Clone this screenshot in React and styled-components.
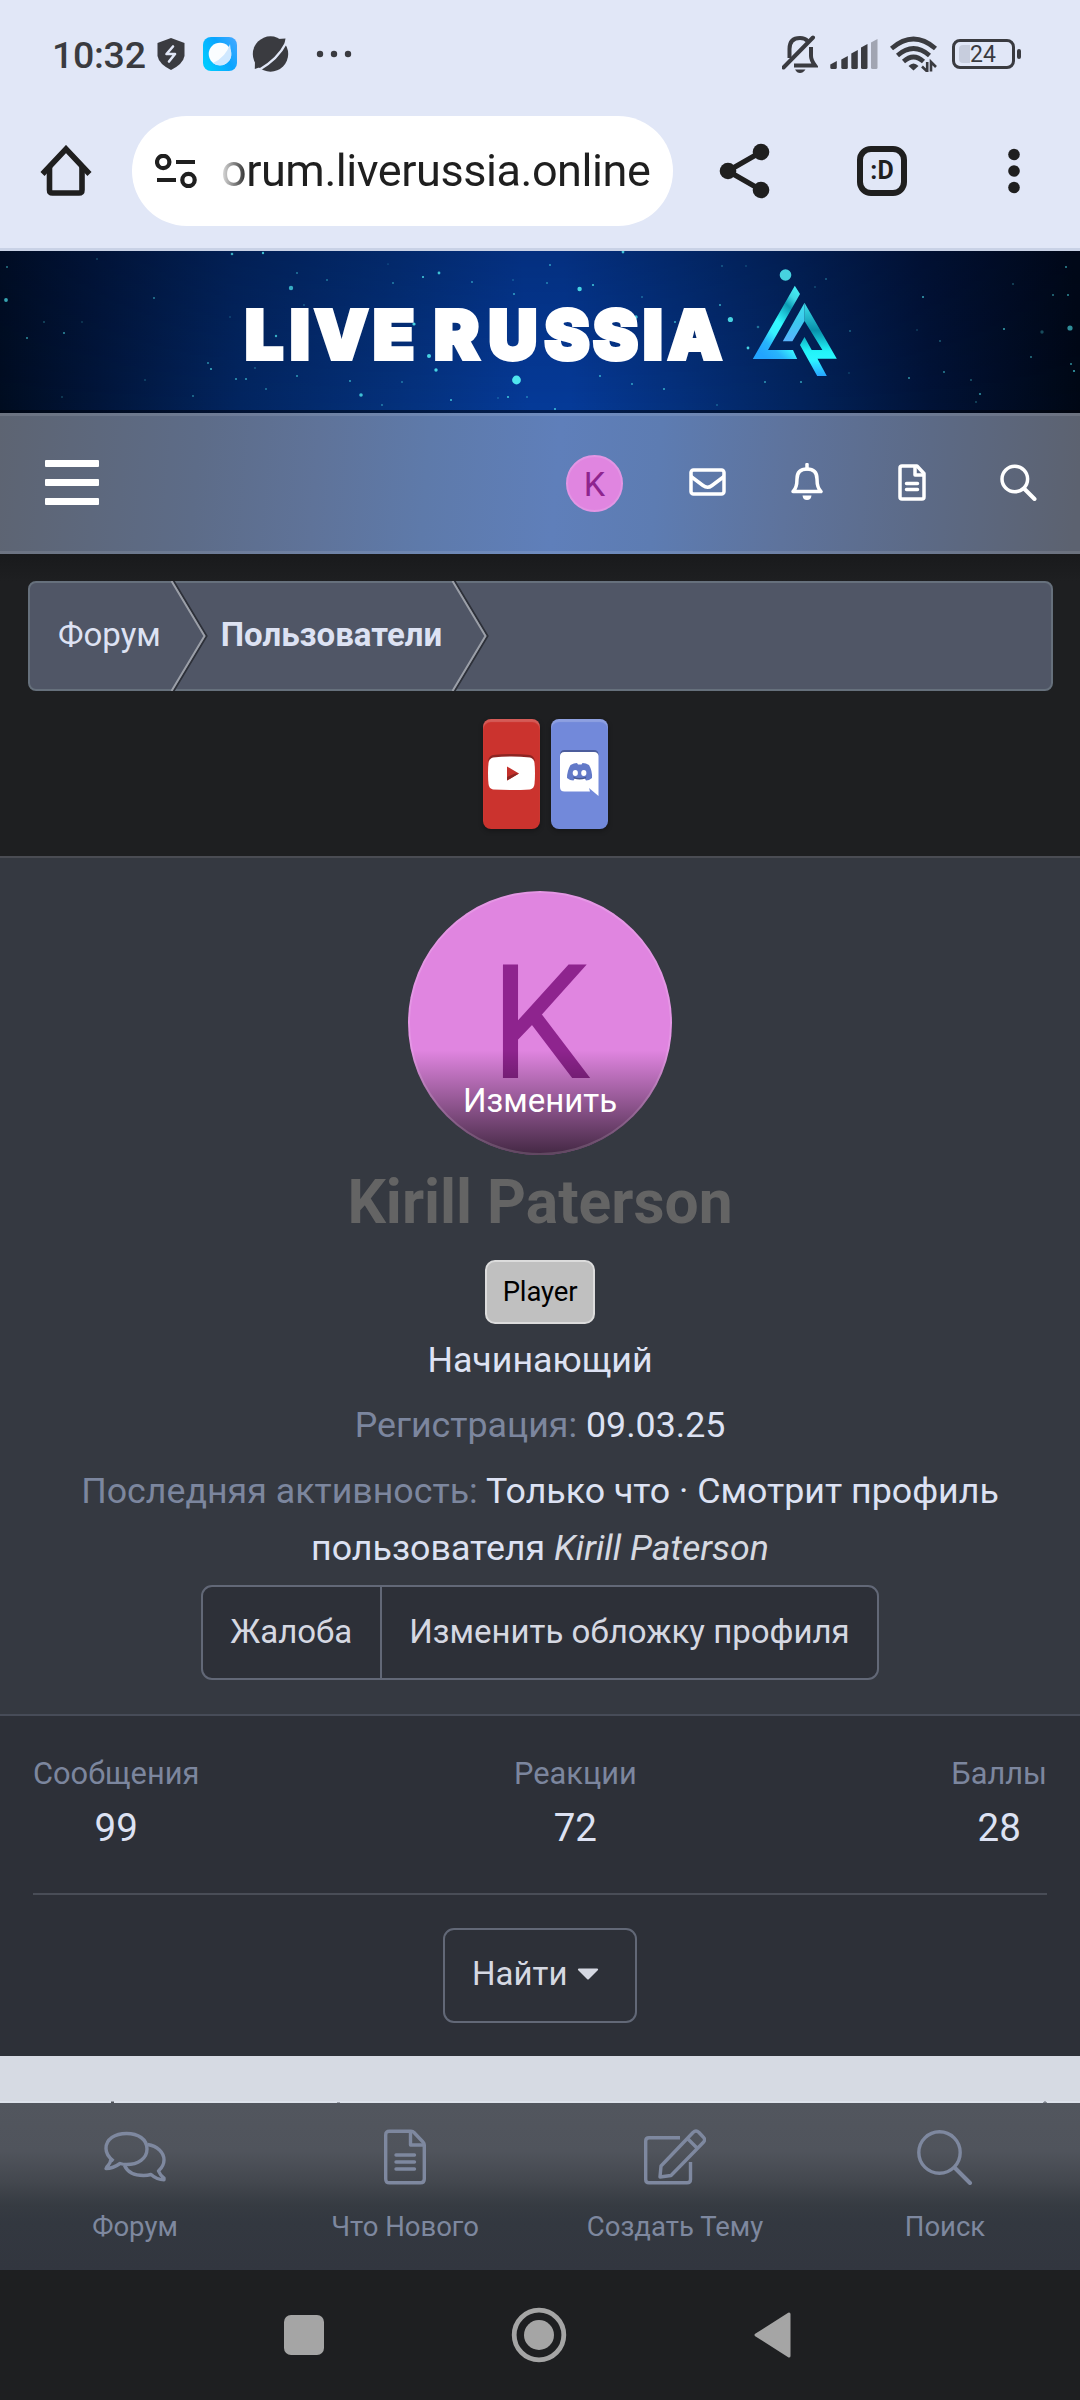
import React from "react";
import styled, { createGlobalStyle, css } from "styled-components";

// small background stars of the banner: [x, y, radius, opacity]
const stars = [
  [6, 49, 1.9, 0.7], [7, 16, 1, 0.5], [97, 8, 0.8, 0.4], [154, 47, 1, 0.5], [44, 71, 0.8, 0.5],
  [27, 87, 1, 0.6], [64, 82, 1, 0.6], [82, 71, 0.7, 0.4], [232, 3, 1.3, 0.7], [263, 2, 1.2, 0.8],
  [291, 37, 2.2, 0.7], [297, 22, 0.9, 0.5], [327, 29, 0.8, 0.7], [304, 54, 0.8, 0.5], [230, 66, 0.7, 0.4],
  [276, 85, 1.2, 0.7], [208, 112, 0.9, 0.6], [211, 118, 1.1, 0.7], [236, 128, 1.1, 0.6], [246, 128, 1.1, 0.6],
  [266, 138, 0.9, 0.5], [297, 125, 1, 0.6], [255, 117, 0.8, 0.5], [193, 145, 0.9, 0.5], [145, 129, 0.8, 0.4],
  [62, 146, 0.8, 0.4], [350, 130, 0.9, 0.7], [361, 144, 1.8, 0.8], [382, 154, 0.9, 0.5], [402, 131, 0.8, 0.7],
  [451, 149, 1, 0.8], [414, 73, 1.6, 0.9], [423, 26, 1, 0.9], [439, 22, 1.4, 0.8], [393, 32, 0.8, 0.8],
  [472, 31, 0.9, 0.6], [514, 43, 1.1, 0.6], [429, 105, 2, 0.9], [436, 119, 1.7, 0.9], [516.5, 129, 4.4, 1],
  [508, 146, 1.1, 0.8], [527, 146, 0.8, 0.7], [498, 147, 0.7, 0.5], [513, 29, 0.7, 0.5], [388, 13, 0.6, 0.5],
  [550, 14, 1, 0.6], [547, 32, 0.8, 0.8], [579.6, 38, 2.2, 0.9], [593, 34, 1.1, 0.8], [623, 1, 1.4, 0.8],
  [642, 46, 0.8, 0.6], [636, 66, 1.7, 0.8], [675, 71, 1, 0.7], [720, 54, 1, 0.7], [730.4, 68.5, 2.6, 0.9],
  [748, 97, 1.4, 0.9], [758, 76, 1.3, 0.4], [785.5, 24, 5.8, 0.9], [722, 15, 0.8, 0.5], [746, 15, 0.7, 0.4],
  [826, 28, 0.8, 0.6], [815, 36, 0.8, 0.4], [850, 80, 0.8, 0.6], [923, 46, 1, 0.7], [917, 79, 0.7, 0.4],
  [940, 90, 0.8, 0.6], [1004, 78, 1, 0.7], [1042, 81, 1.7, 0.3], [1070, 77, 2.6, 0.6], [1053, 44, 1, 0.5],
  [1068, 44, 1, 0.6], [1066, 16, 1, 0.6], [1031, 106, 1, 0.5], [1071, 113, 1, 0.6], [1074, 120, 1.1, 0.7],
  [944, 121, 0.9, 0.6], [909, 127, 1, 0.6], [980, 143, 1.1, 0.6], [976, 151, 0.8, 0.5], [971, 129, 0.9, 0.4],
  [600, 125, 1, 0.7], [632, 133, 0.9, 0.7], [664, 138, 1, 0.7], [801, 131, 1.1, 0.6], [765, 131, 1, 0.6],
  [555, 158, 1, 0.8], [586, 161, 1.3, 0.8], [717, 154, 0.8, 0.5], [849, 122, 0.8, 0.3], [1013, 33, 1, 0.3],
];

const stats = [
  { label: "Сообщения", value: "99" },
  { label: "Реакции", value: "72" },
  { label: "Баллы", value: "28" },
];

const signalBars = [
  { x: 0.3, top: 22 },
  { x: 11.3, top: 17 },
  { x: 21.3, top: 11 },
  { x: 31, top: 5 },
  { x: 41, top: 0, faded: true },
];

function StatusBar() {
  return (
    <StatusRow>
      <Clock>10:32</Clock>
      <StatusIcon width="28" height="34" $left={11}>
        <path d="M14 1 L27.5 6 V19 Q26 27 14 33 Q2 27 0.5 19 V6Z" fill="#3a3b40" />
        <path d="M16 9.5 L9.5 17 H18 L12 24.5" fill="none" stroke="#e1e7f7" strokeWidth="2.6" strokeLinecap="round" strokeLinejoin="round" />
      </StatusIcon>
      <StatusIcon width="34" height="34" $left={18}>
        <defs>
          <linearGradient id="appBlue" x1="0" y1="0.6" x2="1" y2="0">
            <stop offset="0" stopColor="#00c8ff" />
            <stop offset="0.5" stopColor="#0aa5ff" />
            <stop offset="1" stopColor="#4aa8ff" />
          </linearGradient>
        </defs>
        <rect width="34" height="34" rx="8" fill="url(#appBlue)" />
        <circle cx="17" cy="17" r="11.3" fill="#fafdff" />
        <path d="M27 7 Q23 20 10 26 A11.3 11.3 0 0 0 28 15Z" fill="#cfe8ff" />
      </StatusIcon>
      <StatusIcon width="37" height="36" $left={15}>
        <circle cx="18.5" cy="18" r="17.7" fill="#3a3b40" />
        <path d="M26 3 L33.5 2.5 L32 10Z M3 24 L2.8 33 L10 30.5Z" fill="#3a3b40" />
        <path d="M34 7 Q26 23 7 34" fill="none" stroke="#e1e7f7" strokeWidth="2.4" />
      </StatusIcon>
      <StatusIcon width="36" height="8" $left={27}>
        <circle cx="4" cy="4" r="3.2" fill="#3a3b40" />
        <circle cx="18" cy="4" r="3.2" fill="#3a3b40" />
        <circle cx="32" cy="4" r="3.2" fill="#3a3b40" />
      </StatusIcon>
      <Spacer />
      <StatusIcon width="36" height="38" fill="none" stroke="#3a3b40" strokeWidth="4">
        <path d="M7.5 23 V14 Q7.5 3 18 3 Q23 3 25.5 6" />
        <path d="M29 12 V21 Q29 25 33 30.5 H12" />
        <path d="M1.5 32.5 L31 2.5" strokeLinecap="round" />
        <path d="M13 34.5 H23.5 Q21 38 18 38 Q15 38 13 34.5Z" fill="#3a3b40" stroke="none" />
      </StatusIcon>
      <StatusIcon width="48" height="30" $left={12}>
        {signalBars.map(({ x, top, faded }) => (
          <path
            key={x}
            d={`M${x} 28.5 V${top + 3.5} L${x + 6.5} ${top} V28.5 Q${x + 6.5} 30 ${x + 5} 30 H${x + 1.5} Q${x} 30 ${x} 28.5Z`}
            fill={faded ? "#a1a5b2" : "#3a3b40"}
          />
        ))}
      </StatusIcon>
      <StatusIcon width="47" height="36" $left={12} fill="none" stroke="#3a3b40" strokeWidth="4.6">
        <path d="M1.5 12.5 Q23.5 -6.5 45.5 12.5" />
        <path d="M7.5 19.5 Q23.5 5.5 39.5 19.5" />
        <path d="M13.5 25.5 Q23.5 16.5 33.5 25.5" />
        <path d="M18.5 30 Q23.5 25 28.5 30 L23.5 34.5Z" fill="#3a3b40" stroke="none" />
        <path d="M37.2 26 V35.5 L32 30.5 M41 35.5 V26 L46 31" strokeWidth="2.6" />
      </StatusIcon>
      <Battery>
        <BatteryLevel />
        24
      </Battery>
      <BatteryTip />
    </StatusRow>
  );
}

function AddressBar() {
  return (
    <AddressRow>
      <svg width="52" height="52" fill="none" stroke="#1f1f1f" strokeWidth="5.6">
        <path d="M9.5 22 V45 Q9.5 48 12.5 48 H39 Q42 48 42 45 V22" />
        <path d="M2.5 29 L26 4 L49.5 29" />
      </svg>
      <UrlPill>
        <svg width="42" height="34" fill="none" stroke="#1f1f1f" strokeWidth="4.2">
          <circle cx="8.2" cy="8" r="6.2" />
          <path d="M21 8 H40 M2 26 H21" />
          <circle cx="33.5" cy="26" r="6.2" />
        </svg>
        <Url>orum.liverussia.online</Url>
      </UrlPill>
      <ShareIcon width="52" height="56">
        <path d="M42 9 L9 28 L42 47" fill="none" stroke="#1f1f1f" strokeWidth="5.4" />
        <circle cx="42" cy="9" r="8.3" fill="#1f1f1f" />
        <circle cx="9" cy="28" r="8.3" fill="#1f1f1f" />
        <circle cx="42" cy="47" r="8.3" fill="#1f1f1f" />
      </ShareIcon>
      <TabCounter>:D</TabCounter>
      <KebabIcon width="12" height="46">
        <circle cx="6" cy="6.5" r="5.8" fill="#1f1f1f" />
        <circle cx="6" cy="23" r="5.8" fill="#1f1f1f" />
        <circle cx="6" cy="39.5" r="5.8" fill="#1f1f1f" />
      </KebabIcon>
    </AddressRow>
  );
}

function SiteBanner() {
  return (
    <Banner>
      <svg width="1080" height="159" viewBox="0 0 1080 159">
        <defs>
          <linearGradient id="logoLeft" x1="0.9" y1="0" x2="0.3" y2="1">
            <stop offset="0" stopColor="#45f0f5" />
            <stop offset="0.14" stopColor="#3fd8e6" />
            <stop offset="0.27" stopColor="#0c9bb4" />
            <stop offset="0.52" stopColor="#32fbff" />
            <stop offset="0.68" stopColor="#38f0ff" />
            <stop offset="0.84" stopColor="#28b4fb" />
            <stop offset="1" stopColor="#22a4ff" />
          </linearGradient>
          <linearGradient id="logoRight" x1="0" y1="0" x2="0" y2="1">
            <stop offset="0" stopColor="#3fe0ec" />
            <stop offset="0.38" stopColor="#0891ab" />
            <stop offset="0.66" stopColor="#22f4f8" />
            <stop offset="0.78" stopColor="#2bf6ff" />
            <stop offset="1" stopColor="#28a4ff" />
          </linearGradient>
          <linearGradient id="logoInner" x1="0" y1="0" x2="0" y2="1">
            <stop offset="0" stopColor="#3fe0ec" />
            <stop offset="0.5" stopColor="#3cc8ee" />
            <stop offset="1" stopColor="#58b4ff" />
          </linearGradient>
        </defs>
        {stars.map(([x, y, r, o]) => (
          <circle key={`${x}-${y}`} cx={x} cy={y} r={r} fill="#4fe6ee" opacity={o} />
        ))}
        <BannerText x="245 290 314.5 373" y="107.5">LIVE</BannerText>
        <BannerText x="434 488.5 544.5 593 643 668" y="107.5">RUSSIA</BannerText>
        <path d="M794.8 34.7 L800 43 L768 99 H793 L797.2 108 H752.8Z" fill="url(#logoLeft)" />
        <path d="M804.5 51.7 L836.8 107.7 H817.5 L826.8 125 H817.2 L800 94 L804.5 86 L811.7 99 H822.4 L804.5 70Z" fill="url(#logoRight)" />
        <path d="M804.5 51.7 V70 L792.4 90.3 H782.8Z" fill="url(#logoInner)" />
      </svg>
    </Banner>
  );
}

function SiteNav() {
  return (
    <NavBar>
      <MenuButton>
        <i />
        <i />
        <i />
      </MenuButton>
      <NavAvatar>K</NavAvatar>
      <NavIcon width="37" height="28" $left={66}>
        <rect x="2" y="2" width="33" height="24" rx="2.5" />
        <path d="M2 8.5 L14 17.5 Q18.5 21 23 17.5 L35 8.5" />
      </NavIcon>
      <NavIcon width="32" height="38" $left={65}>
        <path d="M2 28.5 Q6 25 6 16 Q6 6 16 6 Q26 6 26 16 Q26 25 30 28.5Z" />
        <path d="M16 1.5 V6" strokeLinecap="round" />
        <path d="M11.5 32.5 H20.5 Q20 37 16 37 Q12 37 11.5 32.5Z" fill="#fff" stroke="none" />
      </NavIcon>
      <NavIcon width="28" height="37" $left={75}>
        <path d="M2 4 Q2 2 4 2 H19 L26 9.5 V33 Q26 35 24 35 H4 Q2 35 2 33Z" />
        <path d="M17 2 V11 H26" />
        <path d="M8.5 19.5 H19.5 M8.5 25.5 H19.5" strokeLinecap="round" />
      </NavIcon>
      <NavIcon width="37" height="37" $left={74}>
        <circle cx="14.8" cy="15" r="12.8" />
        <path d="M24 24.5 L34.5 35" strokeWidth="4" strokeLinecap="round" />
      </NavIcon>
    </NavBar>
  );
}

function CrumbArrow() {
  return (
    <ArrowSvg width="38" height="110" viewBox="0 0 38 110" fill="none">
      <path d="M3.6 0 L36.6 55 L3.6 110" stroke="#2d3039" strokeWidth="2" />
      <path d="M1.5 0 L34.5 55 L1.5 110" stroke="#9b9fa8" strokeWidth="2" />
    </ArrowSvg>
  );
}

function Profile() {
  return (
    <ProfileHeader>
      <BigAvatar>
        K<AvatarEdit>Изменить</AvatarEdit>
      </BigAvatar>
      <UserName>Kirill Paterson</UserName>
      <Badge>Player</Badge>
      <InfoLine>Начинающий</InfoLine>
      <InfoLine>
        <Muted>Регистрация:</Muted> 09.03.25
      </InfoLine>
      <InfoLine>
        <Muted>Последняя активность:</Muted> Только что · Смотрит профиль
        <br />
        пользователя <em>Kirill Paterson</em>
      </InfoLine>
      <ButtonGroup>
        <GroupButton>Жалоба</GroupButton>
        <GroupButton>Изменить обложку профиля</GroupButton>
      </ButtonGroup>
    </ProfileHeader>
  );
}

function TabBar() {
  return (
    <Tabs>
      <Tab>
        <TabIcon width="62" height="56">
          <path d="M9.5 32 Q2 26.5 2 19.5 C2 10 11 4.5 22.5 4.5 C34 4.5 43 10 43 20 C43 29.5 34 35.5 22.5 35.5 Q19 35.5 16 34.5 Q9 39.5 2 39.5 Q2 38.5 4.5 36 Q6.5 33.5 7 30" />
          <path d="M43.5 15.5 C53.5 17 60 23.5 60 31 Q60 37 54.5 42 Q56 46 60 49 V50.8 Q53 50.8 47 45.5 Q43.5 46.5 39.5 46.5 C30.5 46.5 23.5 43 20.5 36.5" />
        </TabIcon>
        Форум
      </Tab>
      <Tab>
        <TabIcon width="42" height="56">
          <path d="M1.7 6 Q1.7 2.2 5.5 2.2 H27 Q29 2.2 30 3.5 L39 13 Q40.3 14.2 40.3 16 V50 Q40.3 53.8 36.5 53.8 H5.5 Q1.7 53.8 1.7 50Z" />
          <path d="M26.5 2.5 V16 H40" />
          <path d="M12 26 H30.5 M12 33 H30.5 M12 40 H30.5" strokeLinecap="round" />
        </TabIcon>
        Что Нового
      </Tab>
      <Tab>
        <TabIcon width="62" height="56">
          <path d="M36 8.7 H5 Q1.7 8.7 1.7 12 V50.5 Q1.7 53.8 5 53.8 H43 Q46.5 53.8 46.5 50.5 V33" />
          <path d="M16 48 L17 37 L49 3.5 Q52 0.6 55 3.5 L59.2 8 Q62 10.7 59.2 13.5 L27 46.5Z M43.5 9.5 L53.5 19.5" />
        </TabIcon>
        Создать Тему
      </Tab>
      <Tab>
        <TabIcon width="56" height="56">
          <circle cx="22.5" cy="23.5" r="20.7" />
          <path d="M38 39 L53 54" strokeWidth="4" strokeLinecap="round" />
        </TabIcon>
        Поиск
      </Tab>
    </Tabs>
  );
}

function App() {
  return (
    <Screen>
      <GlobalStyle />
      <StatusBar />
      <AddressBar />
      <SiteBanner />
      <SiteNav />
      <TopArea>
        <Crumbs>
          <Crumb>Форум</Crumb>
          <CrumbArrow />
          <Crumb $current>Пользователи</Crumb>
          <CrumbArrow />
        </Crumbs>
        <SocialRow>
          <SocialButton $color="#cb332e">
            <svg width="49" height="38" viewBox="0 0 49 38">
              <path d="M6 1 Q24.5 -1 43 1 Q47 2 48 7 Q42 3 24.5 3 Q7 3 1 7 Q2 2 6 1Z" fill="#8d2522" />
              <path d="M6 3.5 Q24.5 1.5 43 3.5 Q47 4.5 47.5 9 Q48.5 19 47.5 30 Q47 34.5 43 35.5 Q24.5 36.5 6 35.5 Q2 34.5 1.5 30 Q0.5 19 1.5 9 Q2 4.5 6 3.5Z" fill="#fff" />
              <path d="M20 12.5 L32 19.5 L20 26.5Z" fill="#c4302b" />
              <path d="M20 26.5 L32 19.5 L28 19.5 L20 23Z" fill="#8d2522" />
            </svg>
          </SocialButton>
          <SocialButton $color="#7289da">
            <svg width="39" height="48" viewBox="0 0 39 48">
              <path d="M0 6 Q0 1 4.5 1 H34 Q38.5 1 38.5 6Z" fill="#4c5d9c" />
              <path d="M4.5 3 H34 Q38.5 3 38.5 7.5 V47 L29 39 L30 42.5 H4.5 Q0 42.5 0 38 V7.5 Q0 3 4.5 3Z" fill="#fff" />
              <path d="M10.5 16 Q14 14 17 14 L18 15.5 H21.5 L22.5 14 Q26 14 29 16 Q32.5 22 32 29 Q29 31.5 26 31.5 L24.5 29 Q19.5 30.5 15 29 L13.5 31.5 Q10 31.5 7 29 Q7 22 10.5 16Z" fill="#6279c8" />
              <path d="M13 27.5 Q19.5 30.5 26.5 27.5 L25.5 29.5 Q19.5 31.5 14 29.5Z" fill="#455691" />
              <ellipse cx="15.3" cy="24" rx="2.6" ry="2.9" fill="#fff" />
              <ellipse cx="23.8" cy="24" rx="2.6" ry="2.9" fill="#fff" />
            </svg>
          </SocialButton>
        </SocialRow>
      </TopArea>
      <Profile />
      <Summary>
        <StatRow>
          {stats.map(({ label, value }) => (
            <Stat key={label}>
              <StatLabel>{label}</StatLabel>
              <StatValue>{value}</StatValue>
            </Stat>
          ))}
        </StatRow>
        <FindButton>
          Найти
          <svg width="22" height="12">
            <path d="M2 0.5 H20 Q22 1 20.5 2.5 L12 11 Q11 12 10 11 L1.5 2.5 Q0 1 2 0.5Z" fill="#d5d8e2" />
          </svg>
        </FindButton>
      </Summary>
      <ContentStrip>
        <svg width="1080" height="2">
          <path d="M111 0.5 H114 V2 H111Z" fill="#50545c" />
          <path d="M337 1 H340 V2 H337Z" fill="#9a9ea8" />
          <path d="M1043 1.5 L1045 0 L1047 1.5 V2 H1043Z" fill="#7d828c" />
        </svg>
      </ContentStrip>
      <TabBar />
      <SystemNav>
        <RecentKey />
        <svg width="56" height="56">
          <circle cx="28" cy="28" r="24.8" fill="none" stroke="#a5a5a5" strokeWidth="4.8" />
          <circle cx="28" cy="28" r="15" fill="#a5a5a5" />
        </svg>
        <svg width="38" height="48">
          <path d="M35 3 V45 L2 24Z" fill="#a5a5a5" stroke="#a5a5a5" strokeWidth="3" strokeLinejoin="round" />
        </svg>
      </SystemNav>
    </Screen>
  );
}

export default App;

const GlobalStyle = createGlobalStyle`
  * {
    box-sizing: border-box;
  }
  body {
    margin: 0;
    font-family: Roboto, "Noto Sans", sans-serif;
  }
  svg {
    display: block;
    flex-shrink: 0;
  }
`;

const Screen = styled.div`
  width: 1080px;
  height: 2400px;
  display: flex;
  flex-direction: column;
  overflow: hidden;
  background: #1e1f21;
  color: #dde2f3;
  & > * {
    flex-shrink: 0;
  }
`;

const StatusRow = styled.div`
  height: 108px;
  padding: 0 59px 0 52px;
  display: flex;
  align-items: center;
  background: #e1e7f7;
`;
const Clock = styled.span`
  width: 94px;
  padding-top: 2px;
  font-size: 37.5px;
  font-weight: 500;
  line-height: 42px;
  letter-spacing: -0.3px;
  color: #3a3b40;
`;
const StatusIcon = styled.svg`
  margin-left: ${({ $left }) => $left || 0}px;
`;
const Spacer = styled.div`
  flex: 1;
`;
const Battery = styled.div`
  width: 63px;
  height: 30px;
  margin-left: 15px;
  display: flex;
  align-items: center;
  padding: 2px 0 0 4px;
  border: 3px solid #3a3b40;
  border-radius: 8px;
  font-size: 23px;
  line-height: 22px;
  color: #3a3b40;
`;
const BatteryLevel = styled.span`
  width: 11px;
  height: 18px;
  margin-top: -2px;
  border-radius: 4px 0 0 4px;
  background: #c7cddd;
`;
const BatteryTip = styled.span`
  width: 4px;
  height: 10px;
  margin-left: 2px;
  border-radius: 2px;
  background: #3a3b40;
`;

const AddressRow = styled.div`
  height: 143px;
  padding: 0 60px 15px 40px;
  display: flex;
  align-items: center;
  background: #e1e7f7;
  border-bottom: 3px solid #c9d2e6;
`;
const UrlPill = styled.div`
  width: 541px;
  height: 110px;
  margin-left: 40px;
  padding-left: 23px;
  display: flex;
  align-items: center;
  border-radius: 55px;
  background: #fff;
`;
const Url = styled.span`
  margin-left: 24px;
  font-size: 45px;
  line-height: 54px;
  letter-spacing: -0.45px;
  white-space: nowrap;
  color: transparent;
  background: linear-gradient(90deg, #e4e4e4 0, #1f1f1f 27px);
  background-clip: text;
`;
const ShareIcon = styled.svg`
  margin-left: 46px;
`;
const TabCounter = styled.div`
  width: 50px;
  height: 50px;
  margin-left: 86px;
  display: flex;
  align-items: center;
  justify-content: center;
  border: 6px solid #1f1f1f;
  border-radius: 14px;
  font-size: 25px;
  font-weight: 700;
  color: #1f1f1f;
`;
const KebabIcon = styled.svg`
  margin-left: 101px;
`;

const Banner = styled.header`
  height: 162px;
  border-bottom: 3px solid rgba(0, 0, 0, 0.4);
  background:
    linear-gradient(rgba(0, 10, 40, 0.22), transparent 100%),
    linear-gradient(87deg, #000c20 0, #01153a 100px, #022560 240px, #04317c 400px, #053a98 530px, #053a98 570px, #04307c 680px, #02235c 800px, #011236 930px, #000714 1080px) border-box;
`;
const BannerText = styled.text`
  font-family: Inter, "Open Sans", sans-serif;
  font-size: 67.5px;
  font-weight: 900;
  fill: #fff;
  stroke: #fff;
  stroke-width: 4;
`;

const NavBar = styled.nav`
  height: 141px;
  padding: 0 43px 0 45px;
  display: flex;
  align-items: center;
  border-top: 3px solid rgba(255, 255, 255, 0.1);
  border-bottom: 3px solid rgba(255, 255, 255, 0.1);
  background: linear-gradient(95deg, #5d6472 0, #5d6c88 200px, #5f7399 320px, #5e7aaa 430px, #5f7fba 560px, #5d7cb2 660px, #5e739c 790px, #5c6a86 930px, #5c6270 1080px) border-box;
`;
const MenuButton = styled.div`
  width: 54px;
  margin: -2px auto 0 0;
  display: flex;
  flex-direction: column;
  gap: 12px;
  i {
    height: 7px;
    border-radius: 1px;
    background: #fff;
  }
`;
const NavAvatar = styled.div`
  width: 57px;
  height: 57px;
  display: flex;
  align-items: center;
  justify-content: center;
  border: 2px solid #e395e4;
  border-radius: 50%;
  background: #e085e0;
  color: #8e248e;
  font-size: 34px;
`;
const NavIcon = styled.svg`
  margin: -3px 0 0 ${({ $left }) => $left}px;
  fill: none;
  stroke: #fff;
  stroke-width: 3.5;
  stroke-linejoin: round;
`;

const TopArea = styled.div`
  height: 304px;
  padding: 27px 27px 0 28px;
  border-bottom: 2px solid #4a4c53;
  background: linear-gradient(#191a1c, #1e1f21 27px);
`;
const Crumbs = styled.div`
  height: 110px;
  padding-left: 28px;
  display: flex;
  align-items: center;
  border: 2px solid #66707c;
  border-radius: 8px;
  background: #505666;
`;
const Crumb = styled.span`
  padding-bottom: 3px;
  font-size: 33px;
  color: #dde2f3;
  ${({ $current }) =>
    $current &&
    css`
      margin-left: 13px;
      font-weight: 700;
    `}
`;
const ArrowSvg = styled.svg`
  margin: -2px 0 -2px 9px;
`;
const SocialRow = styled.div`
  margin-top: 28px;
  padding-left: 10px;
  display: flex;
  justify-content: center;
  gap: 11px;
`;
const SocialButton = styled.div`
  width: 57px;
  height: 110px;
  padding-bottom: 2px;
  display: flex;
  align-items: center;
  justify-content: center;
  border-radius: 8px;
  background: ${({ $color }) => $color};
  box-shadow: inset 0 3px 1px rgba(255, 255, 255, 0.2), 0 2px 5px rgba(0, 0, 0, 0.3);
`;

const ProfileHeader = styled.section`
  height: 856px;
  padding-top: 33px;
  display: flex;
  flex-direction: column;
  align-items: center;
  background: #353941;
`;
const BigAvatar = styled.div`
  position: relative;
  width: 264px;
  height: 264px;
  overflow: hidden;
  border-radius: 50%;
  background: #e085e0;
  color: #8e248e;
  font-size: 160px;
  line-height: 266px;
  text-align: center;
  &::after {
    content: "";
    position: absolute;
    inset: 0;
    border: 2px solid rgba(255, 255, 255, 0.15);
    border-radius: 50%;
  }
`;
const AvatarEdit = styled.span`
  position: absolute;
  left: 0;
  right: 0;
  bottom: 0;
  height: 105px;
  padding-top: 26px;
  background: linear-gradient(transparent, rgba(0, 0, 0, 0.7));
  color: #fff;
  font-size: 33px;
  line-height: 50px;
`;
const UserName = styled.h1`
  margin: 5px 0 0;
  font-size: 60.5px;
  font-weight: 700;
  line-height: 85px;
  color: #646464;
`;
const Badge = styled.span`
  width: 110px;
  height: 64px;
  margin: 15px 0 -0.5px;
  padding-bottom: 1px;
  display: flex;
  align-items: center;
  justify-content: center;
  border: 2px solid #dcdcdc;
  border-radius: 10px;
  background: #c0c0c0;
  color: #000;
  font-size: 27.5px;
  letter-spacing: -0.15px;
`;
const InfoLine = styled.p`
  margin: 8.25px 0 0;
  font-size: 35.75px;
  line-height: 57.2px;
  text-align: center;
  white-space: nowrap;
  em {
    color: #d6d9e1;
  }
`;
const Muted = styled.span`
  color: #7c869e;
`;
const ButtonGroup = styled.div`
  height: 95px;
  margin-top: 8px;
  display: flex;
  border: 2px solid #626877;
  border-radius: 11px;
  background: #2d3038;
`;
const GroupButton = styled.div`
  padding: 0 27.5px 3px;
  display: flex;
  align-items: center;
  font-size: 33px;
  color: #d5d8e2;
  & + & {
    border-left: 2px solid #626877;
  }
`;

const Summary = styled.section`
  height: 342px;
  padding: 33px;
  display: flex;
  flex-direction: column;
  align-items: center;
  border-top: 2px solid #474c58;
  background: #2d3038;
`;
const StatRow = styled.div`
  width: 100%;
  height: 146px;
  display: flex;
  justify-content: space-between;
  border-bottom: 2px solid #494d57;
`;
const Stat = styled.div`
  text-align: center;
`;
const StatLabel = styled.div`
  font-size: 30.8px;
  line-height: 49px;
  color: #7c869e;
`;
const StatValue = styled.div`
  font-size: 38.5px;
  line-height: 60px;
`;
const FindButton = styled.div`
  width: 194px;
  height: 95px;
  margin-top: 33px;
  padding: 0 0 4px 27px;
  display: flex;
  align-items: center;
  gap: 10px;
  border: 2px solid #626877;
  border-radius: 11px;
  font-size: 33px;
  color: #d5d8e2;
`;

const ContentStrip = styled.div`
  height: 47px;
  display: flex;
  align-items: flex-end;
  background: linear-gradient(#d6dae3 45px, #dde2eb 45px);
`;

const Tabs = styled.nav`
  height: 167px;
  display: grid;
  grid-template-columns: repeat(4, 1fr);
  background: linear-gradient(#52565e 0, #50545c 48px, #44484f 78px, #363b42 102px, #333840 120px, #32363f 167px);
`;
const Tab = styled.div`
  padding-top: 26px;
  display: flex;
  flex-direction: column;
  align-items: center;
  gap: 20px;
  font-size: 27.5px;
  line-height: 44px;
  color: #7e889f;
`;
const TabIcon = styled.svg`
  fill: none;
  stroke: #7e889f;
  stroke-width: 3.4;
  stroke-linejoin: round;
`;

const SystemNav = styled.div`
  height: 130px;
  padding: 0 288px 0 284px;
  display: flex;
  align-items: center;
  justify-content: space-between;
  background: #1e1f21;
`;
const RecentKey = styled.span`
  width: 40px;
  height: 40px;
  border-radius: 7px;
  background: #a5a5a5;
`;
